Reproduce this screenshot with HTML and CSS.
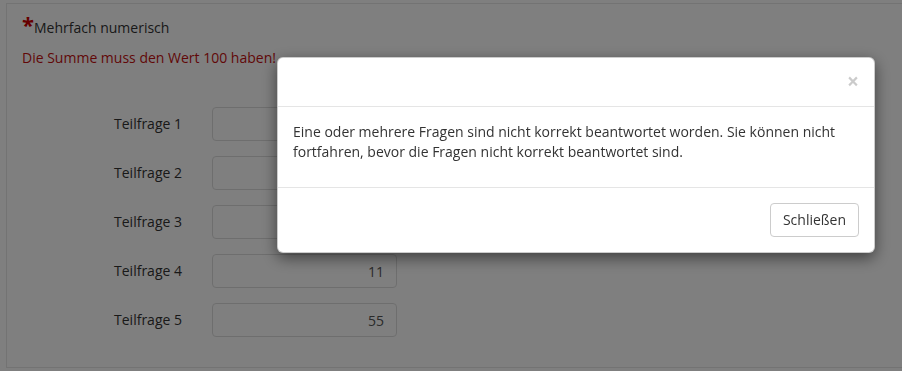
FILE: index.html
```html
<!DOCTYPE html>
<html lang="de">
<head>
  <meta charset="UTF-8">
  <meta name="viewport" content="width=device-width, initial-scale=1.0">
  <title>Umfrage</title>
  <link rel="stylesheet" href="styles.css">
</head>
<body>

  <div class="question">
    <div class="question-title"><span class="asterisk">*</span>Mehrfach numerisch</div>
    <div class="question-error">Die Summe muss den Wert 100 haben!</div>

    <div class="answers">
      <div class="answer-row">
        <label for="q1">Teilfrage 1</label>
        <input type="text" id="q1" value="">
      </div>
      <div class="answer-row">
        <label for="q2">Teilfrage 2</label>
        <input type="text" id="q2" value="">
      </div>
      <div class="answer-row">
        <label for="q3">Teilfrage 3</label>
        <input type="text" id="q3" value="">
      </div>
      <div class="answer-row">
        <label for="q4">Teilfrage 4</label>
        <input type="text" id="q4" value="11">
      </div>
      <div class="answer-row">
        <label for="q5">Teilfrage 5</label>
        <input type="text" id="q5" value="55">
      </div>
    </div>
  </div>

  <!-- Hinweisdialog -->
  <div class="backdrop"></div>
  <div class="modal">
    <div class="modal-header">
      <button type="button" class="close">&times;</button>
    </div>
    <div class="modal-body">
      <p>Eine oder mehrere Fragen sind nicht korrekt beantwortet worden. Sie können nicht fortfahren, bevor die Fragen nicht korrekt beantwortet sind.</p>
    </div>
    <div class="modal-footer">
      <button type="button" class="btn">Schließen</button>
    </div>
  </div>

</body>
</html>
```

FILE: styles.css
```css
html, body {
  margin: 0;
  padding: 0;
  overflow: hidden;
}
body {
  font-family: "Open Sans", sans-serif;
  font-size: 14px;
  line-height: 20px;
  color: #333;
  background-color: #fff;
  height: 371px;
}
.question {
  box-sizing: border-box;
  margin: 3px 0 0 6px;
  height: 365px;
  padding: 14px 15px;
  border: 1px solid #e6e6e6;
  border-right: none;
}
.question-title {
  color: #333;
}
.asterisk {
  color: #cc0000;
  font-size: 22px;
  font-weight: bold;
  line-height: 0;
}
.question-error {
  margin-top: 10px;
  color: #c41010;
}
.answers {
  margin-top: 39px;
  display: flex;
  flex-direction: column;
  gap: 15px;
}
.answer-row {
  display: flex;
  align-items: center;
}
.answer-row label {
  width: 160px;
  padding-right: 30px;
  text-align: right;
}
.answer-row input {
  box-sizing: border-box;
  width: 185px;
  height: 34px;
  padding: 6px 12px;
  border: 1px solid #ddd;
  border-radius: 4px;
  font-family: inherit;
  font-size: 14px;
  color: #555;
  text-align: right;
}
.backdrop {
  position: fixed;
  top: 0;
  left: 0;
  right: 0;
  bottom: 0;
  background-color: rgba(0, 0, 0, 0.5);
}
.modal {
  position: fixed;
  top: 57px;
  left: 277px;
  width: 598px;
  box-sizing: border-box;
  background-color: #fff;
  border: 1px solid rgba(0, 0, 0, 0.2);
  border-radius: 6px;
  box-shadow: 0 5px 15px rgba(0, 0, 0, 0.5);
}
.modal-header {
  height: 18px;
  padding: 15px;
  border-bottom: 1px solid #e5e5e5;
}
.close {
  float: right;
  margin-top: -2px;
  padding: 0;
  border: none;
  background: none;
  font-family: inherit;
  font-size: 21px;
  font-weight: bold;
  line-height: 1;
  color: #000;
  opacity: 0.2;
  cursor: pointer;
}
.modal-body {
  padding: 15px;
}
.modal-body p {
  margin: 0 0 10px;
}
.modal-footer {
  padding: 15px;
  border-top: 1px solid #e5e5e5;
  text-align: right;
}
.btn {
  padding: 6px 12px;
  border: 1px solid #ccc;
  border-radius: 4px;
  background-color: #fff;
  font-family: inherit;
  font-size: 14px;
  line-height: 20px;
  color: #333;
  cursor: pointer;
}
```
